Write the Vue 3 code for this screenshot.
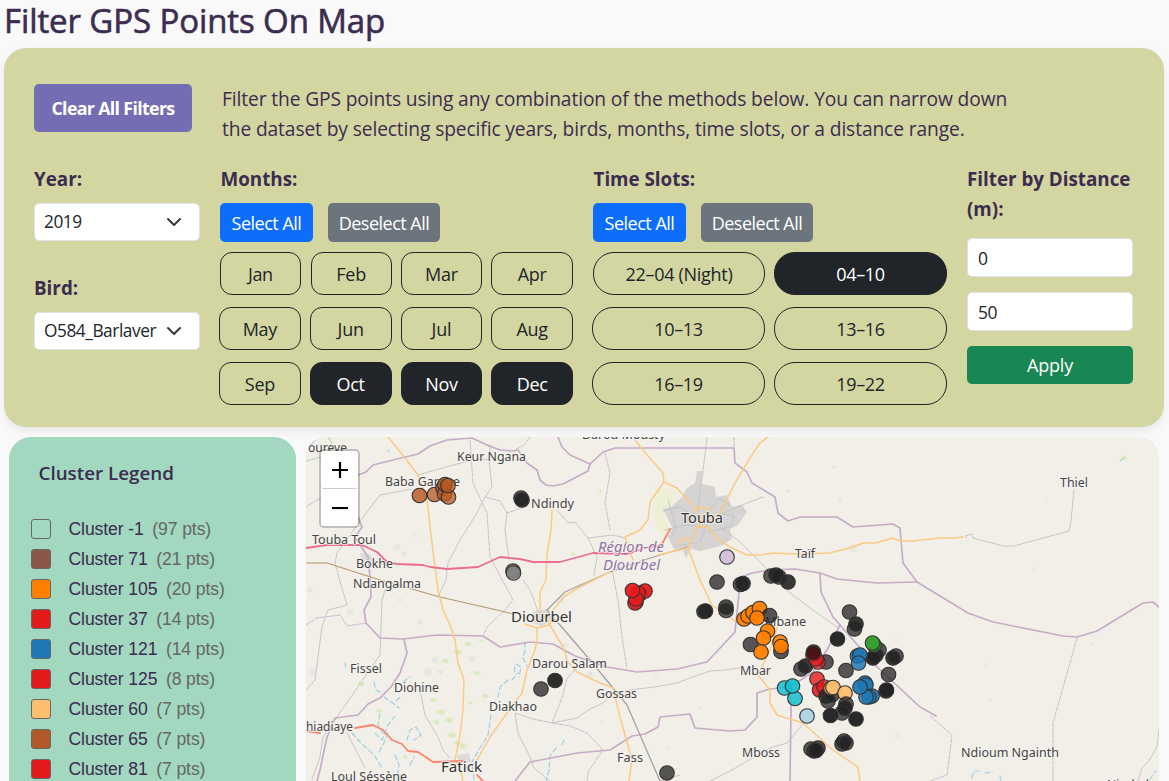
<script setup>
const months = ['Jan', 'Feb', 'Mar', 'Apr', 'May', 'Jun', 'Jul', 'Aug', 'Sep', 'Oct', 'Nov', 'Dec']
const activeMonths = ['Oct', 'Nov', 'Dec']
const slots = ['22–04 (Night)', '04–10', '10–13', '13–16', '16–19', '19–22']
const activeSlots = ['04–10']

const clusters = [
  { id: '-1', pts: 97, color: 'transparent' },
  { id: '71', pts: 21, color: '#8c564b' },
  { id: '105', pts: 20, color: '#ff7f00' },
  { id: '37', pts: 14, color: '#e31a1c' },
  { id: '121', pts: 14, color: '#1f78b4' },
  { id: '125', pts: 8, color: '#e31a1c' },
  { id: '60', pts: 7, color: '#fdbf6f' },
  { id: '65', pts: 7, color: '#b15928' },
  { id: '81', pts: 7, color: '#e31a1c' },
]

const minor = [
  '418,475 453,465 478,459 490,460', '412,489 380,495 363,517 337,553 335,563 341,585 347,605 328,610 322,627 315,680 306,690',
  '490,445 489,460 492,487 485,497 477,513 460,540 448,563 446,580 438,597', '485,497 500,501 507,513 505,530 509,560', '507,513 522,508',
  '557,510 568,523 575,522 588,538 597,557 594,575', '588,538 613,535 625,538', '707,438 703,470 698,510',
  '523,580 530,590 535,603 538,612', '763,497 737,507 722,514', '720,527 740,542 763,565 790,593 813,610 837,627',
  '967,538 965,536 972,534 973,538 992,543 1003,546 1014,546 1069,531 1071,521 1074,490',
  '1159,730 1157,747 1149,761 1142,768 1138,781', '385,590 382,600 380,655 337,717 323,737 320,757 312,780',
  '420,690 425,715 438,737 443,750 450,758', '347,733 365,768', '740,668 725,670 710,671 690,678 677,683 655,687 637,689 613,693 603,703 588,710 577,718 552,723 533,719 515,713 518,733 530,757 534,768 550,781',
  '710,781 730,771 770,748 787,743 803,724', '306,507 325,495 345,475', '530,437 524,445 515,450', '627,437 625,440',
  '663,511 680,507 692,515 707,525 700,542 676,546', '665,530 685,525 707,527', '710,510 720,498 730,506', '722,514 734,516 730,527 708,532', '668,500 676,528 672,536',
]
const orange = [
  '388,437 405,458 418,475 427,500 432,543 438,590 443,610 450,625 455,640 458,663 464,680 463,710 460,735 455,760 460,768 463,781',
  '635,440 648,456 663,473 664,482 650,502 648,520 640,530 625,537 633,560', '664,482 677,488 697,510 700,518',
  '768,437 760,443 750,458 735,483 720,513 712,521', '694,510 702,507 710,510 708,518 700,523 697,527 688,548 700,580 712,605 735,621',
  '697,527 708,527 716,538 730,547 747,555 760,555 773,553 795,554 830,553 853,547 863,543 875,543 893,538 900,541 913,541 940,538 955,538 963,537',
  '678,546 679,541 687,538 690,540', '658,555 675,551 688,548', '552,510 551,530 547,553 546,580 540,592 540,612 550,625 563,647 568,662 577,672 598,682 613,688 620,717 632,760 629,781',
  '610,572 578,588 565,596 553,610 550,625 537,628 525,624', '537,628 537,640 535,650 527,670 522,693 507,713 490,737 477,760',
  '778,625 770,650 758,675 770,690 770,703 777,715 803,723 833,750 858,767 860,781',
]
const boundary = [
  '358,475 366,472 373,465 393,460 418,454 430,446 447,440 472,438 487,445 500,450 513,451 518,450 527,463 537,470 540,480 546,485 553,486 563,484 588,471 590,464 603,452 615,448 734,448 735,463 747,472 752,483 775,497 778,513 788,521 800,517 837,517 853,527 893,524 900,528 903,563 917,582 940,596 968,613 993,622 1063,636 1077,637 1097,631 1143,603 1153,602 1159,607',
  '558,437 562,447 570,455 590,464', '358,517 362,527 355,537 368,557 370,577 371,597 364,610 366,623 380,638 403,639 437,635 483,636 500,647 530,642 553,644 575,656 607,667 637,672 677,669 707,662 735,632 739,593 741,577 752,573 770,570 795,569 820,573 837,579 877,583 917,582',
  '820,573 821,592 833,617 840,625 827,650 813,672 790,687 770,689 757,693', '404,639 407,653 400,673 391,687 380,698 368,704 358,715 335,718 327,737 320,770 317,781',
  '515,781 530,762 577,753 610,750 632,736 645,734 658,727 660,717 690,714 695,728 730,731 745,730 757,717 757,693', '790,687 791,710 790,781', '840,625 875,665 920,707 936,716', '317,437 310,445',
]
const dashed = [
  '470,440 473,483 487,513 490,557 513,600 505,610 487,627 483,636', '605,453 610,473 605,503 610,530', '612,570 618,600 622,637 627,668',
  '1077,638 1053,723 1053,781', '930,716 952,735 947,775 930,781', '575,670 567,678 563,695 552,723 570,726 587,733 603,750 588,772 587,781', '306,625 317,618 340,615 347,626 366,623', '734,437 734,448', '660,781 680,775',
]
const trunk = '306,548 327,545 362,545 377,552 387,562 397,564 423,565 430,567 447,569 478,567 500,557 520,559 533,562 560,562 593,553 627,554 648,547'
const rivers = [
  '374,682 376,690 382,693', '384,697 390,701 399,708', '396,701 400,697', '403,682 410,677', '380,714 378,725 384,735', '395,716 388,725 382,740 375,733', '352,733 360,742 374,755 382,768', '388,733 383,745 379,752', '407,740 410,730 416,727 421,735 414,740', '395,755 399,765 397,780', '410,765 414,757', '515,667 514,674', '508,680 500,687 498,697', '491,715 488,735 480,748 472,762 474,780', '516,664 521,667 519,677', '512,680 518,673', '525,642 525,650 523,658 527,666', '564,740 562,745', '556,748 550,756 549,770 546,780', '972,778 974,771 979,771', '985,773 993,772', '1001,781 1000,776', '1150,779 1156,771', '1120,461 1123,459', '388,450 389,451', '345,663 346,667',
]
const greens = [
  [457, 652, 5], [468, 644, 4], [481, 641, 3], [445, 661, 4], [440, 672, 3], [477, 673, 4], [485, 696, 4], [470, 703, 3], [433, 700, 4], [441, 712, 5], [449, 720, 5], [436, 722, 4], [452, 735, 5], [463, 746, 5], [457, 743, 4], [379, 711, 4], [361, 684, 4], [405, 757, 3], [573, 554, 3], [600, 491, 2], [1124, 458, 4],
]
const specks = [
  [397, 547, 3], [404, 554, 3], [415, 535, 2], [310, 590, 3], [350, 612, 3], [390, 590, 2], [400, 600, 2], [313, 672, 4], [428, 672, 4], [420, 622, 3], [435, 660, 3], [472, 659, 3], [590, 675, 3], [560, 600, 3], [565, 645, 2], [580, 585, 2], [840, 499, 2], [834, 467, 2], [788, 491, 2], [853, 548, 4], [740, 517, 2], [1046, 501, 1.5], [1034, 569, 1.5], [1092, 644, 1.5], [986, 665, 1.5], [898, 735, 2.5], [896, 641, 1.5], [700, 708, 1.5], [656, 676, 1.5], [602, 722, 1.5], [667, 748, 1.5], [990, 700, 1.5],
]

const places = [
  ['oureve', 308, 39, 452], ['Keur Ngana', 457, 69, 461], ['Baba Garage', 385, 75, 486], ['Ndindy', 531, 43, 508], ['Darou Mousty', 582, 83, 439],
  ['Touba Toul', 312, 64, 544], ['Bokhe', 356, 37, 568], ['Ndangalma', 353, 68, 588], ['Taïf', 795, 20, 557.5], ['Thiel', 1060, 28, 487],
  ['Darou Salam', 532, 75, 668], ['Fissel', 350, 32, 673], ['Diohine', 394, 45, 692], ['Gossas', 596, 41, 697.5], ['Diakhao', 489, 48, 711],
  ['hiadiaye', 306, 47, 731], ['Fass', 617, 26, 762], ['Loul Séssène', 331, 76, 781], ['Mbar', 740, 31, 675], ['Mboss', 742, 38, 757],
  ['Ndioum Ngainth', 961, 98, 757], ['Mbane', 765, 41, 626], ['Niarbel', 1107, 42, 789],
]
const towns = [['Touba', 681, 42, 523], ['Diourbel', 511, 61, 622], ['Fatick', 441, 41, 772]]

const K = '#222222', O = '#ff7f00', R = '#e8191c', B = '#1f78b4', T = '#17becf', W = '#b85820', P = '#fdbf6f'
const points = [
  [419.5, 495.5, W, .82], [434.5, 494.5, W], [443, 488, W], [444.5, 494, W], [445, 484.5, W], [448.5, 497, W], [448, 485.5, W],
  [521, 498, K], [522, 500, K, .9], [513, 571, K, .6], [513.5, 573, '#888888'],
  [727, 557, '#cab2d6'], [717, 582, K], [740.5, 584.5, K], [743, 583.5, K, .9], [771, 576, K], [776, 575, K, .9], [779, 577, K], [788, 582, K, .9], [704, 611.5, K], [705.5, 611, K, .9], [726, 607, K, .8], [726, 610.5, K, .7],
  [636, 602, R], [635, 603, R], [640, 594, R, .95], [645, 591, R, .95], [638, 593, R, .9], [636, 599, R, .9], [632.5, 590.5, R, .95],
  [750.5, 644.5, K], [781, 651.5, K], [744, 619, O, .95], [748, 616, O, .95], [753, 612.5, O, .95], [759.5, 608.5, O, .95], [769.5, 615.5, K], [757, 618, O, .95], [767.5, 631, O, .95], [763.5, 638, O, .95], [780, 642, O, .9], [761, 652, O, .95], [781, 646.5, O, .9],
  [849.5, 612, K], [854.5, 629, K], [856, 624, K, .9], [837.5, 639, K, .97], [826, 662, K], [801, 669, K], [805.5, 666, K, .9], [813.5, 652, K], [813, 655, R], [818, 662, R], [816, 659, R], [813.5, 653, '#3b1014', .85],
  [846, 670.5, K], [888.5, 674.5, K], [896, 656, K], [893, 658, K, .9], [879, 650, K], [876, 655, K, .9], [873, 658, K, .95], [874, 645, '#33a02c'], [872.5, 643, '#33a02c', .95], [857.5, 656, B, .9], [860, 655, B, .9], [858.5, 663, B, .85],
  [784.5, 688, T, .85], [795, 698.5, T, .85], [792.5, 686, T, .95], [807, 716, '#a6cee3', .85], [817, 679, R, .8], [819.5, 690, R, .9], [824, 687, R], [826, 696, K], [828, 701, K], [832, 695, K], [831, 688, P, .9], [833, 687.5, P, .95], [845, 693, P, .95],
  [886, 691, K], [886.5, 690, K, .95], [846, 704, K], [845, 708, K, .9], [830.5, 715.5, K, .97], [842, 713, K], [856, 719, K, .97],
  [865, 683, B, .95], [866, 685, B, .9], [872, 696, B, .9], [869, 697, B, .9], [866, 697, B, .8], [860, 687, B, .95],
  [844, 741, K], [842, 744, K, .8], [846, 743, K], [811, 749, K], [814, 751, K], [818, 748, K, .8], [816, 750.5, K],
  [541, 689, K], [555, 680.5, K, .95], [667, 773, K],
]
</script>

<template>
  <main class="page">
    <h1>Filter GPS Points On Map</h1>
    <section class="filters">
      <div class="intro">
        <button class="clear">Clear All Filters</button>
        <p>Filter the GPS points using any combination of the methods below. You can narrow down<br>the dataset by selecting specific years, birds, months, time slots, or a distance range.</p>
      </div>
      <div class="columns">
        <div class="col">
          <label>Year:</label>
          <div class="field select"><span>2019</span><svg viewBox="0 0 16 16"><path d="m2 5 6 6 6-6" /></svg></div>
          <label class="bird">Bird:</label>
          <div class="field select"><span>O584_Barlaver</span><svg viewBox="0 0 16 16"><path d="m2 5 6 6 6-6" /></svg></div>
        </div>
        <div class="col">
          <label class="shift">Months:</label>
          <div class="bulk"><button class="blue">Select All</button><button class="grey">Deselect All</button></div>
          <div class="grid months">
            <button v-for="m in months" :key="m" :class="{ on: activeMonths.includes(m) }">{{ m }}</button>
          </div>
        </div>
        <div class="col">
          <label class="shift">Time Slots:</label>
          <div class="bulk"><button class="blue">Select All</button><button class="grey">Deselect All</button></div>
          <div class="grid slots">
            <button v-for="s in slots" :key="s" :class="{ on: activeSlots.includes(s) }">{{ s }}</button>
          </div>
        </div>
        <div class="col distance">
          <label class="two">Filter by Distance<br>(m):</label>
          <div class="field num">0</div>
          <div class="field num">50</div>
          <button class="apply">Apply</button>
        </div>
      </div>
    </section>

    <div class="lower">
      <aside class="legend">
        <h2>Cluster Legend</h2>
        <ul>
          <li v-for="c in clusters" :key="c.id">
            <i :style="{ background: c.color }"></i><span>Cluster {{ c.id }}</span><small>({{ c.pts }} pts)</small>
          </li>
        </ul>
      </aside>
      <div class="map">
        <svg class="tiles" viewBox="306 437 853 344">
          <rect x="306" y="437" width="853" height="344" fill="#f2efe9" />
          <path d="M655 487l22 3-7 20-6 5 8 25-14-8-5-20z" fill="#eef0d5" />
          <path d="M663 509l8-2 10-9 6-10 8-5 2-12 5 0-1 13 14 3 1 10 11-2 5 12 10-2 5 7-9 13-8 4 2 10-9 6-10 3-13 3-9-2-5 9-4-10-8 1-6-12 4-10z" fill="#d5d4d2" />
          <path d="M533 612l16-4 3 11-10 8-10-4zM457 755l12-2 2 9-12 2zM360 553l10 1 5 7-4 4-9-5z" fill="#dddbd8" />
          <circle v-for="(s, i) in specks" :key="'s' + i" :cx="s[0]" :cy="s[1]" :r="s[2]" fill="#dfdedb" opacity=".55" />
          <path v-for="(g, i) in greens" :key="'g' + i" :d="`M${g[0] - g[2]} ${g[1]}l${g[2]} ${-g[2] * .6}l${g[2]} ${g[2] * .5}l${-g[2] * .7} ${g[2] * .8}z`" fill="#d9ebbf" />
          <polyline v-for="(p, i) in rivers" :key="'r' + i" :points="p" class="river" />
          <polyline v-for="(p, i) in minor" :key="'m' + i" :points="p" class="minor" />
          <polyline v-for="(p, i) in dashed" :key="'d' + i" :points="p" class="dashed" />
          <polyline v-for="(p, i) in boundary" :key="'b' + i" :points="p" class="boundary" />
          <polyline points="306,563 327,563 380,580 440,597 497,610 513,614" class="brown" />
          <polyline points="687,547 647,559 610,572 565,592 547,610 550,615 560,625 590,660 627,705 660,781" class="rail" />
          <polyline v-for="(p, i) in orange" :key="'o' + i" :points="p" class="orange" />
          <polyline :points="trunk" class="trunk" />
          <path d="M648 547l13-1 9-17" class="primary" />
          <path d="M355 728l18-3 10 5 9 10 10 4 6 7 10 1 15 10 30-1M477 775l6 6M306 731l14 2" class="primary" />
          <path d="M306 461l15-4M328 437l4 6" class="local" />
          <text v-for="p in places" :key="p[0]" :x="p[1]" :y="p[3]" :textLength="p[2]" lengthAdjust="spacingAndGlyphs" class="place">{{ p[0] }}</text>
          <text v-for="p in towns" :key="p[0]" :x="p[1]" :y="p[3]" :textLength="p[2]" lengthAdjust="spacingAndGlyphs" class="place town">{{ p[0] }}</text>
          <text x="598" y="551.5" textLength="66" lengthAdjust="spacingAndGlyphs" class="place region">Région-de</text>
          <text x="603" y="570" textLength="57" lengthAdjust="spacingAndGlyphs" class="place region">Diourbel</text>
          <circle v-for="(p, i) in points" :key="'p' + i" :cx="p[0]" :cy="p[1]" r="7.3" :fill="p[2]" :fill-opacity="p[3] || .75" stroke="#333" stroke-width="1.1" />
        </svg>
        <div class="zoom">
          <button><svg viewBox="0 0 18 18"><path d="M9 1v16M1 9h16" /></svg></button>
          <button><svg viewBox="0 0 18 18"><path d="M1 9h16" /></svg></button>
        </div>
      </div>
    </div>
  </main>
</template>

<style>
html, body { background: #f9f9f9; overflow: hidden; }
</style>

<style scoped>
* { box-sizing: border-box; }
.page { width: 1169px; height: 781px; overflow: hidden; display: flex; flex-direction: column; background: #f9f9f9; color: #3b2c50; font-family: "Open Sans", "Noto Sans", sans-serif; font-size: 18px; }
h1 { flex: none; margin: 0 0 0 4px; height: 48px; font-size: 33px; line-height: 42px; font-weight: 500; letter-spacing: -.1px; white-space: nowrap; -webkit-text-stroke: .6px #3b2c50; }
.filters { height: 379px; flex: none; margin: 0 5px 0 4px; padding: 36px 30px 0; background: #d3d6a0; border-radius: 22px; box-shadow: 0 4px 10px rgba(0, 0, 0, .07); }
.intro { display: flex; height: 80px; }
.intro p { margin: 0 0 0 30px; font-size: 19.2px; letter-spacing: -.11px; line-height: 30px; white-space: nowrap; }
button { font: inherit; letter-spacing: -.5px; border: 0; padding: 0; }
.clear { width: 158px; height: 48px; background: #756db3; color: #fff; border-radius: 5px; font-weight: 700; font-size: 17.8px; letter-spacing: -.65px; }
.columns { display: grid; grid-template-columns: 166px 354px 355px 166px; column-gap: 19px; }
.col { display: flex; flex-direction: column; }
.distance { margin: 0 -1px 0 1px; }
label { display: block; height: 39px; line-height: 30px; font-weight: 700; font-size: 18.8px; white-space: nowrap; }
label.shift { padding-left: 1.5px; }
label.bird { margin-top: 32px; height: 39px; }
label.two { height: 74px; }
.field { height: 38px; background: #fff; border: 1px solid #dee2e6; border-radius: 5px; color: #212529; padding-left: 10px; line-height: 38px; font-size: 17.5px; letter-spacing: -.5px; }
.select { display: flex; align-items: center; justify-content: space-between; padding: 0 17px 0 9px; }
.select:first-of-type { height: 38px; }
.select span { width: 114px; font-size: 17.3px; letter-spacing: -.45px; white-space: nowrap; }
.select svg { width: 16px; height: 16px; fill: none; stroke: #343a40; stroke-width: 2; stroke-linecap: round; stroke-linejoin: round; }
.num { margin-bottom: 15px; height: 39px; line-height: 39px; }
.apply { height: 38px; background: #198754; color: #fff; border-radius: 5px; letter-spacing: -.2px; }
.bulk { display: flex; gap: 15px; height: 39px; margin-left: 1px; }
.bulk button { color: #fff; border-radius: 5px; }
.blue { width: 93px; background: #0d6efd; }
.grey { width: 112px; background: #6c757d; }
.grid { display: grid; margin-top: 10px; gap: 12px 9px; }
.months { grid-template-columns: repeat(4, 1fr); }
.slots { grid-template-columns: repeat(2, 1fr); }
.grid button { height: 43px; border: 1px solid #212529; border-radius: 12px; background: transparent; color: #212529; letter-spacing: -.3px; }
.months button:nth-child(-n+2), .slots button:first-child { margin-left: 1px; }
.slots button { border-radius: 21px; }
.grid button.on { background: #212529; color: #fff; }
.lower { display: flex; margin-top: 10px; padding-left: 9px; gap: 10px; flex: 1; min-height: 0; }
.legend { width: 287px; height: 420px; background: #a1d8bf; border-radius: 22px 22px 0 0; padding: 21px 22px; }
h2 { margin: 0 0 26px 7.5px; font-size: 18.8px; line-height: 30px; font-weight: 600; }
ul { list-style: none; margin: 0; padding: 0; font-family: "Liberation Sans", Arial, sans-serif; font-size: 17.6px; letter-spacing: -.1px; }
li { display: flex; align-items: center; height: 30px; }
li i { width: 20px; height: 20px; border: 1px solid #666; border-radius: 3px; margin-right: 17.5px; }
li small { font-size: inherit; color: #666; margin-left: 8.5px; }
.map { position: relative; width: 853px; height: 344px; border-radius: 20px 20px 0 0; overflow: hidden; }
.tiles { display: block; width: 853px; height: 344px; }
polyline, .primary, .local { fill: none; stroke-linejoin: round; stroke-linecap: round; }
.minor { stroke: #c3c2c2; stroke-width: .9; }
.river { stroke: #9ed0e2; stroke-width: 1.2; stroke-dasharray: 5 3; }
.dashed { stroke: #cfbacf; stroke-width: 1; stroke-dasharray: 4 1.5; }
.boundary { stroke: #c6acc6; stroke-width: 1.7; }
.brown { stroke: #b69871; stroke-width: 1.2; }
.rail { stroke: #a3a3a3; stroke-width: 1.3; }
.orange { stroke: #fbca83; stroke-width: 1.5; }
.trunk { stroke: #ec6d90; stroke-width: 1.8; }
.primary { stroke: #f9876f; stroke-width: 1.8; }
.local { stroke: #b4dab0; stroke-width: 1.2; }
.place { font-family: "Noto Sans", sans-serif; font-size: 12.5px; letter-spacing: 0; fill: #444; stroke: #f7f5f2; stroke-width: 2; stroke-opacity: .75; paint-order: stroke; }
.town { font-size: 14.5px; fill: #333; }
.region { font-size: 15px; font-style: italic; fill: #9272a3; }
.zoom { position: absolute; left: 13px; top: 12px; width: 41px; height: 79px; border: 2px solid rgba(0, 0, 0, .2); border-radius: 5px; background-clip: padding-box; background-color: #fff; }
.zoom button { display: flex; align-items: center; justify-content: center; width: 37px; height: 37px; background: #fff; border-radius: 3px; }
.zoom button:first-child { height: 38px; border-bottom: 1px solid #ccc; }
.zoom svg { width: 18px; height: 18px; }
.zoom path { stroke: #000; stroke-width: 2.2; }
</style>
